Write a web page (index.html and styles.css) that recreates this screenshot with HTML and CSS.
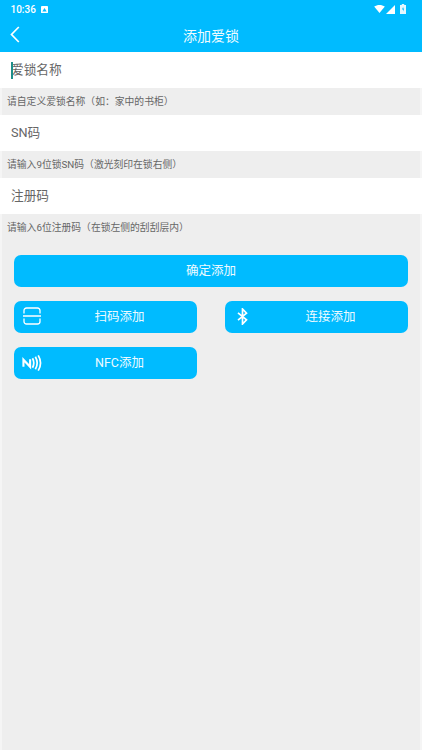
FILE: index.html
```html
<!DOCTYPE html>
<html lang="zh">
<head>
<meta charset="utf-8">
<title>添加爱锁</title>
<link rel="stylesheet" href="styles.css">
</head>
<body>
<div class="app">
  <header class="top">
    <div class="status">
      <div class="status-left">
        <span class="time">10:36</span>
        <svg class="notif" viewBox="0 0 8 8"><rect width="8" height="8" rx="1" fill="#fff"/><path d="M1.5 6.2 4 2.2l2.5 4z" fill="#00bbff"/></svg>
      </div>
      <div class="status-right">
        <svg class="wifi" viewBox="0 0 12 9"><path d="M0 1.8C3.400-.6 8.600-.6 12 1.800L6 9z" fill="#fff"/></svg>
        <svg class="signal" viewBox="0 0 9 9"><path d="M9 0v9H0z" fill="#fff"/></svg>
        <svg class="battery" viewBox="0 0 6 10"><path d="M1.800 0h2.400v1H6v9H0V1h1.800z" fill="#e4f7ff"/><path d="M3.300 2.500 2 5.500h1v2l1.200-3h-1z" fill="#00bbff"/></svg>
      </div>
    </div>
    <div class="nav">
      <svg class="back" viewBox="0 0 10 17"><path d="M8.800 1 1.500 8.500l7.300 7.500" fill="none" stroke="#fff" stroke-width="1.700"/></svg>
      <h1 class="title">添加爱锁</h1>
    </div>
  </header>

  <main class="form">
    <div class="field"><span class="caret"></span><span class="placeholder">爱锁名称</span></div>
    <p class="hint">请自定义爱锁名称（如：家中的书柜）</p>
    <div class="field"><span class="placeholder">SN码</span></div>
    <p class="hint">请输入9位锁SN码（激光刻印在锁右侧）</p>
    <div class="field"><span class="placeholder">注册码</span></div>
    <p class="hint">请输入6位注册码（在锁左侧的刮刮层内）</p>

    <div class="actions">
      <button class="btn btn-full" type="button">确定添加</button>
      <div class="btn-grid">
        <button class="btn" type="button">
          <svg class="btn-icon scan" viewBox="0 0 18 18"><path d="M1 6.500V3.500a2.500 2.500 0 0 1 2.500-2.500h11a2.500 2.500 0 0 1 2.500 2.500v3M1 11.500v3a2.500 2.500 0 0 0 2.500 2.500h11a2.500 2.500 0 0 0 2.500-2.500v-3M0 9h18" fill="none" stroke="#fff" stroke-width="1.300"/></svg>
          扫码添加
        </button>
        <button class="btn" type="button">
          <svg class="btn-icon bt" viewBox="0 0 11 17"><path d="M1 4.800l8.500 7L5.500 16V1l4 4.200L1 12.200" fill="none" stroke="#fff" stroke-width="1.700"/></svg>
          连接添加
        </button>
        <button class="btn" type="button">
          <svg class="btn-icon nfc" viewBox="0 0 22 18"><path d="M1.500 13V5.500l7 7.500V5" fill="none" stroke="#fff" stroke-width="2.200"/><path d="M11 4c1.800 3.300 1.800 6.700 0 10M14 2.500c2.500 4.300 2.500 8.700 0 13M17 1c3.200 5.300 3.200 10.700 0 16" fill="none" stroke="#fff" stroke-width="1.800"/></svg>
          NFC添加
        </button>
      </div>
    </div>
  </main>
</div>
</body>
</html>
```
FILE: styles.css
```css
* { box-sizing: border-box; }
html, body { margin: 0; padding: 0; }
body {
  width: 422px;
  height: 750px;
  overflow: hidden;
  background: #f5f5f5;
  font-family: "Roboto", "Noto Sans CJK SC", sans-serif;
}
.app { height: 750px; display: flex; flex-direction: column; }
.top { background: #00bbff; color: #fff; height: 52px; flex: none; }
.status {
  height: 17px;
  padding: 1px 16px 0 10.500px;
  display: flex;
  justify-content: space-between;
  align-items: center;
}
.status-left, .status-right { display: flex; align-items: center; }
.time { font-size: 10px; font-weight: 500; }
.notif { width: 7px; height: 7px; margin-left: 5px; }
.wifi { width: 11px; height: 8px; }
.signal { width: 9px; height: 9px; margin-left: 1px; }
.battery { width: 6px; height: 10px; margin-left: 5px; }
.nav { height: 35px; position: relative; display: flex; align-items: center; justify-content: center; }
.back { position: absolute; left: 10px; top: 9px; width: 10px; height: 17px; }
.title { margin: 0; font-size: 14px; font-weight: 400; color: #f0fbff; }
.form { flex: 1; background: #eeeeee; margin: 0 2px 0 2px; }
.field {
  height: 35.500px;
  margin: 0 -2px;
  background: #fff;
  padding-left: 11px;
  padding-bottom: 2.500px;
  display: flex;
  align-items: center;
  position: relative;
}
.placeholder { font-size: 12.700px; color: #666; }
.caret { position: absolute; left: 11px; top: 10px; width: 1.500px; height: 17px; background: #1f8f8a; }
.hint {
  margin: 0;
  height: 27.500px;
  padding-left: 5px;
  font-size: 9.800px;
  line-height: 27.500px;
  color: #666;
}
.actions { padding: 13.500px 12px 0; }
.btn {
  height: 32px;
  border: 0;
  border-radius: 7px;
  background: #00bbff;
  color: #eefaff;
  font: inherit;
  font-size: 12.500px;
  width: 100%;
  display: block;
  position: relative;
  padding: 0 0 2px 28px;
}
.btn-full { padding: 0 0 2px; }
.btn-grid {
  margin-top: 14px;
  display: grid;
  grid-template-columns: 183px 183px;
  justify-content: space-between;
  row-gap: 14px;
}
.btn-icon { position: absolute; top: 7px; }
.scan { left: 9px; top: 6px; width: 18px; height: 18px; }
.bt { left: 12px; width: 11px; height: 17px; }
.nfc { left: 8px; top: 7px; width: 21px; height: 18px; }
```
